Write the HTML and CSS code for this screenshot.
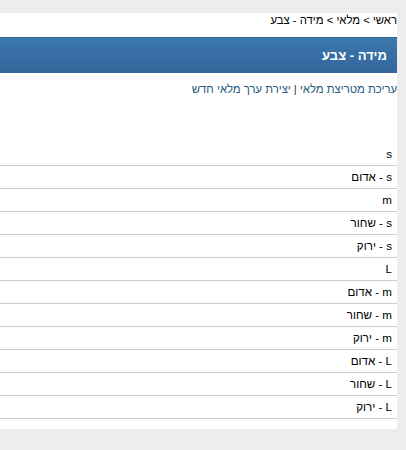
FILE: index.html
```html
<!DOCTYPE html>
<html lang="he" dir="rtl">
<head>
<meta charset="utf-8">
<link rel="stylesheet" href="styles.css">
</head>
<body>
<div class="panel">
  <div class="crumbs">ראשי &gt; מלאי &gt; מידה - צבע</div>
  <div class="head">מידה - צבע</div>
  <div class="links"><a href="#">עריכת מטריצת מלאי</a> <span class="sep">|</span> <a href="#">יצירת ערך מלאי חדש</a></div>
  <ul class="rows">
    <li>s</li>
    <li>s - אדום</li>
    <li>m</li>
    <li>s - שחור</li>
    <li>s - ירוק</li>
    <li>L</li>
    <li>m - אדום</li>
    <li>m - שחור</li>
    <li>m - ירוק</li>
    <li>L - אדום</li>
    <li>L - שחור</li>
    <li>L - ירוק</li>
  </ul>
</div>
</body>
</html>
```
FILE: styles.css
```css
html, body {
  margin: 0;
  padding: 0;
  background: #ededed;
  font-family: "Liberation Sans", Arial, sans-serif;
  font-size: 11.3px;
  color: #000;
}
.panel {
  width: 397px;
  margin: 13px 9px 0 0;
  background: #fff;
  padding-bottom: 10px;
}
.crumbs {
  height: 24px;
  line-height: 15px;
  box-sizing: border-box;
}
.head {
  height: 36px;
  line-height: 35px;
  box-sizing: border-box;
  border-top: 1px solid #2f6193;
  background: linear-gradient(#3b77ae, #33669a);
  color: #fff;
  font-weight: bold;
  font-size: 13px;
  padding-right: 10px;
}
.links {
  padding-top: 8px;
  line-height: 16px;
  height: 16px;
  margin-bottom: 46px;
}
.links a {
  color: #22587c;
  text-decoration: none;
}
.sep {
  color: #3b1f5c;
}
.rows {
  list-style: none;
  margin: 0;
  padding: 0;
}
.rows li {
  height: 22px;
  line-height: 22px;
  border-bottom: 1px solid #cccccc;
  padding-right: 5px;
  font-size: 11.6px;
}
```
